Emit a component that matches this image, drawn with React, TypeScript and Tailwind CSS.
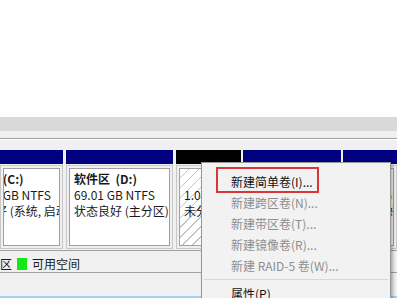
import React from 'react';

const font = { fontFamily: '"Noto Sans CJK SC", "Noto Sans", sans-serif' };

const menuItems = [
  { label: '新建简单卷(I)...', enabled: true },
  { label: '新建跨区卷(N)...', enabled: false },
  { label: '新建带区卷(T)...', enabled: false },
  { label: '新建镜像卷(R)...', enabled: false },
  { label: '新建 RAID-5 卷(W)...', enabled: false },
];

const PartBox: React.FC<{ children: React.ReactNode; hatched?: boolean }> = ({ children, hatched }) => (
  <div className="mt-[1px] h-[84px] border border-[#c8c8c8] bg-[#f0f0f0] p-[2px]">
    <div
      className={`h-full overflow-hidden border border-[#a0a0a0] pl-[4px] pt-[2px] text-[12px] leading-[16px] whitespace-nowrap text-[#1a1a1a] ${
        hatched
          ? 'bg-[repeating-linear-gradient(135deg,#ffffff_0px,#ffffff_6px,#c4c4c4_6px,#c4c4c4_7px)]'
          : 'bg-white'
      }`}
    >
      {children}
    </div>
  </div>
);

export default function App() {
  return (
    <div className="relative h-[298px] w-[397px] overflow-hidden bg-white" style={font}>
      <div className="h-[117px] bg-white" />
      <div className="h-[14px] bg-[#d9d9d9]" />
      <div className="h-[7px] bg-[#f0f0f0]" />
      <div className="h-[1px] bg-[#a0a0a0]" />
      <div className="h-[1px] bg-white" />
      <div className="h-[10px] bg-[#f0f0f0]" />

      {/* disk row */}
      <div className="flex h-[100px] bg-[#f0f0f0]">
        <div className="flex w-[63px] shrink-0 flex-col">
          <div className="h-[14px] bg-[#000080]" />
          <PartBox>
            <div className="-ml-[56px] font-bold">本地磁盘 (C:)</div>
            <div className="-ml-[38px]">59.00 GB NTFS</div>
            <div className="-ml-[49px]">状态良好 (系统, 启动, 页面文件, 主分区)</div>
          </PartBox>
        </div>
        <div className="ml-[3px] flex w-[107px] shrink-0 flex-col">
          <div className="h-[14px] bg-[#000080]" />
          <PartBox>
            <div className="font-bold">软件区&nbsp;&nbsp;(D:)</div>
            <div>69.01 GB NTFS</div>
            <div>状态良好 (主分区)</div>
          </PartBox>
        </div>
        <div className="ml-[3px] flex w-[65px] shrink-0 flex-col">
          <div className="h-[14px] bg-black" />
          <PartBox hatched>
            <div>&nbsp;</div>
            <div>1.00 GB</div>
            <div>未分配</div>
          </PartBox>
        </div>
        <div className="ml-[2px] flex w-[98px] shrink-0 flex-col">
          <div className="h-[14px] bg-[#000080]" />
          <PartBox>
            <div className="font-bold">文档 (E:)</div>
            <div>80.00 GB NTFS</div>
            <div>状态良好 (主分区)</div>
          </PartBox>
        </div>
        <div className="ml-[2px] flex min-w-0 flex-1 flex-col">
          <div className="h-[14px] bg-[#000080]" />
          <PartBox>
            <div className="font-bold">新加卷&nbsp;&nbsp;(I:)</div>
            <div>59.01 GB NTFS</div>
            <div>状态良好: 主分区</div>
          </PartBox>
        </div>
      </div>

      {/* legend */}
      <div className="flex h-[23px] items-center border-y border-[#a0a0a0] bg-[#f0f0f0] pt-[4px] text-[12px] leading-[14px] text-[#1a1a1a]">
        <span className="-ml-[24px]">主分区</span>
        <span className="ml-[5px] h-[12px] w-[10px] bg-[#12e812]" />
        <span className="ml-[5px]">可用空间</span>
      </div>
      <div className="h-[23px] bg-[#f0f0f0]" />
      <div className="h-[2px] bg-[#a6d0ee]" />

      {/* context menu */}
      <div className="absolute left-[201px] top-[162px] h-[150px] w-[190px] border border-[#979797] bg-[#f2f2f2] pt-[8px] text-[12px] shadow-[2px_2px_3px_rgba(0,0,0,0.3)]">
        {menuItems.map((it) => (
          <div
            key={it.label}
            className={`flex h-[21px] items-center pl-[29px] ${it.enabled ? 'text-[#111]' : 'text-[#8e8e8e]'}`}
          >
            {it.label}
          </div>
        ))}
        <div className="mx-[2px] my-[3px] h-[1px] bg-[#d7d7d7]" />
        <div className="flex h-[21px] items-center pl-[29px] text-[#111]">属性(P)</div>
        <div className="absolute left-[14px] top-[4px] h-[26px] w-[103px] border-2 border-[#d9363a]" />
      </div>
    </div>
  );
}
